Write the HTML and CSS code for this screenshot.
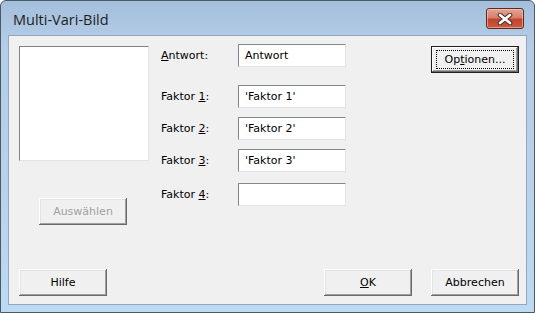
FILE: index.html
```html
<!DOCTYPE html>
<html lang="de">
<head>
  <meta charset="UTF-8" />
  <title>Multi-Vari-Bild</title>
  <link rel="stylesheet" href="styles.css">
</head>
<body>

  <div class="window">
    <div class="titlebar">
      <span class="title">Multi-Vari-Bild</span>
      <button class="close" type="button" aria-label="Schließen">
        <svg width="18" height="12" viewBox="0 0 18 12">
          <path d="M4 2 L14 10 M14 2 L4 10" stroke="#4a2a24" stroke-width="4.6" stroke-linecap="round"/>
          <path d="M4 2 L14 10 M14 2 L4 10" stroke="#fff" stroke-width="2.6" stroke-linecap="round"/>
        </svg>
      </button>
    </div>

    <div class="client">
      <div class="top">
        <div class="left-col">
          <div class="listbox"></div>
          <button class="btn" type="button" disabled>Auswählen</button>
        </div>

        <div class="fields">
          <div class="row first">
            <label class="lbl"><u>A</u>ntwort:</label>
            <div class="textbox">Antwort</div>
          </div>
          <div class="row">
            <label class="lbl">Faktor <u>1</u>:</label>
            <div class="textbox">'Faktor 1'</div>
          </div>
          <div class="row">
            <label class="lbl">Faktor <u>2</u>:</label>
            <div class="textbox">'Faktor 2'</div>
          </div>
          <div class="row">
            <label class="lbl">Faktor <u>3</u>:</label>
            <div class="textbox">'Faktor 3'</div>
          </div>
          <div class="row last">
            <label class="lbl">Faktor <u>4</u>:</label>
            <div class="textbox"></div>
          </div>
        </div>

        <div class="right-col">
          <button class="btn default" type="button"><span class="focus">Op<u>t</u>ionen...</span></button>
        </div>
      </div>

      <div class="bottom">
        <button class="btn" type="button">Hilfe</button>
        <div class="spacer"></div>
        <button class="btn" type="button"><u>O</u>K</button>
        <button class="btn" type="button">Abbrechen</button>
      </div>
    </div>
  </div>

</body>
</html>
```

FILE: styles.css
```css
* {
  margin: 0;
  padding: 0;
  box-sizing: border-box;
}

body {
  background: #fff;
  font-family: 'DejaVu Sans', sans-serif;
}

.window {
  width: 535px;
  height: 313px;
  display: flex;
  flex-direction: column;
  border: 1px solid #4b5866;
  border-radius: 6px 6px 0 0;
  background: linear-gradient(180deg, #a4bfdc 0%, #b5cde7 15%, #b8d2ec 60%, #bcdaf2 100%);
  padding: 0 7px 7px 7px;
  overflow: hidden;
}

.titlebar {
  height: 34px;
  display: flex;
  align-items: center;
  padding-left: 5px;
  padding-top: 3px;
}

.title {
  font-family: 'Open Sans', sans-serif;
  font-size: 14.5px;
  color: #1e1e1e;
  flex: 1;
}

.close {
  width: 38px;
  height: 21px;
  margin-right: 3px;
  margin-top: -2px;
  border: 1px solid #5c2a22;
  border-radius: 3px;
  background: linear-gradient(180deg, #e3a596 0%, #d6806c 45%, #c2452e 55%, #c95a40 100%);
  box-shadow: inset 0 0 0 1px rgba(255, 220, 210, 0.5);
  display: flex;
  align-items: center;
  justify-content: center;
}

.client {
  flex: 1;
  background: #f0f0f0;
  border: 1px solid #91a6bf;
  display: flex;
  flex-direction: column;
  justify-content: space-between;
  padding: 8px 7px 8px 9px;
  font-size: 11px;
  color: #000;
}

.top {
  display: flex;
}

.left-col {
  width: 139px;
  display: flex;
  flex-direction: column;
  padding-left: 1px;
  padding-top: 2px;
}

.listbox {
  width: 130px;
  height: 115px;
  background: #fff;
  border: 1px solid #e3e3e3;
  border-top-color: #828282;
  border-left-color: #828282;
}

.left-col .btn {
  margin-top: 37px;
  margin-left: 20px;
}

.fields {
  display: flex;
  flex-direction: column;
  gap: 9px;
  padding-left: 4px;
}

.row {
  display: flex;
  align-items: center;
  height: 23px;
}

.row.first {
  margin-bottom: 9px;
}

.row.last {
  margin-top: 2px;
}

.lbl {
  width: 77px;
  font-size: 11px;
}

.textbox {
  width: 108px;
  height: 23px;
  background: #fff;
  border: 1px solid #e3e3e3;
  border-top-color: #828790;
  border-left-color: #828790;
  padding: 4px 0 0 6px;
  white-space: nowrap;
}

.right-col {
  flex: 1;
  display: flex;
  justify-content: flex-end;
  padding-top: 2px;
}

.btn {
  width: 88px;
  height: 27px;
  font-family: 'DejaVu Sans', sans-serif;
  font-size: 11px;
  color: #000;
  background: #f0f0f0;
  border: none;
  box-shadow: inset -1px -1px 0 #696969, inset 1px 1px 0 #fff, inset -2px -2px 0 #a0a0a0, inset 2px 2px 0 #e3e3e3;
  display: flex;
  align-items: center;
  justify-content: center;
}

.btn:disabled {
  color: #a0a0a0;
}

.btn.default {
  box-shadow: inset 0 0 0 1px #1e1e1e, inset -2px -2px 0 #696969, inset 2px 2px 0 #fff, inset -3px -3px 0 #a0a0a0;
}

.btn .focus {
  border: 1px dotted #000;
  width: 78px;
  height: 19px;
  display: flex;
  align-items: center;
  justify-content: center;
}

.bottom {
  display: flex;
  gap: 19px;
  padding-left: 1px;
}

.bottom .spacer {
  flex: 1;
}
```
